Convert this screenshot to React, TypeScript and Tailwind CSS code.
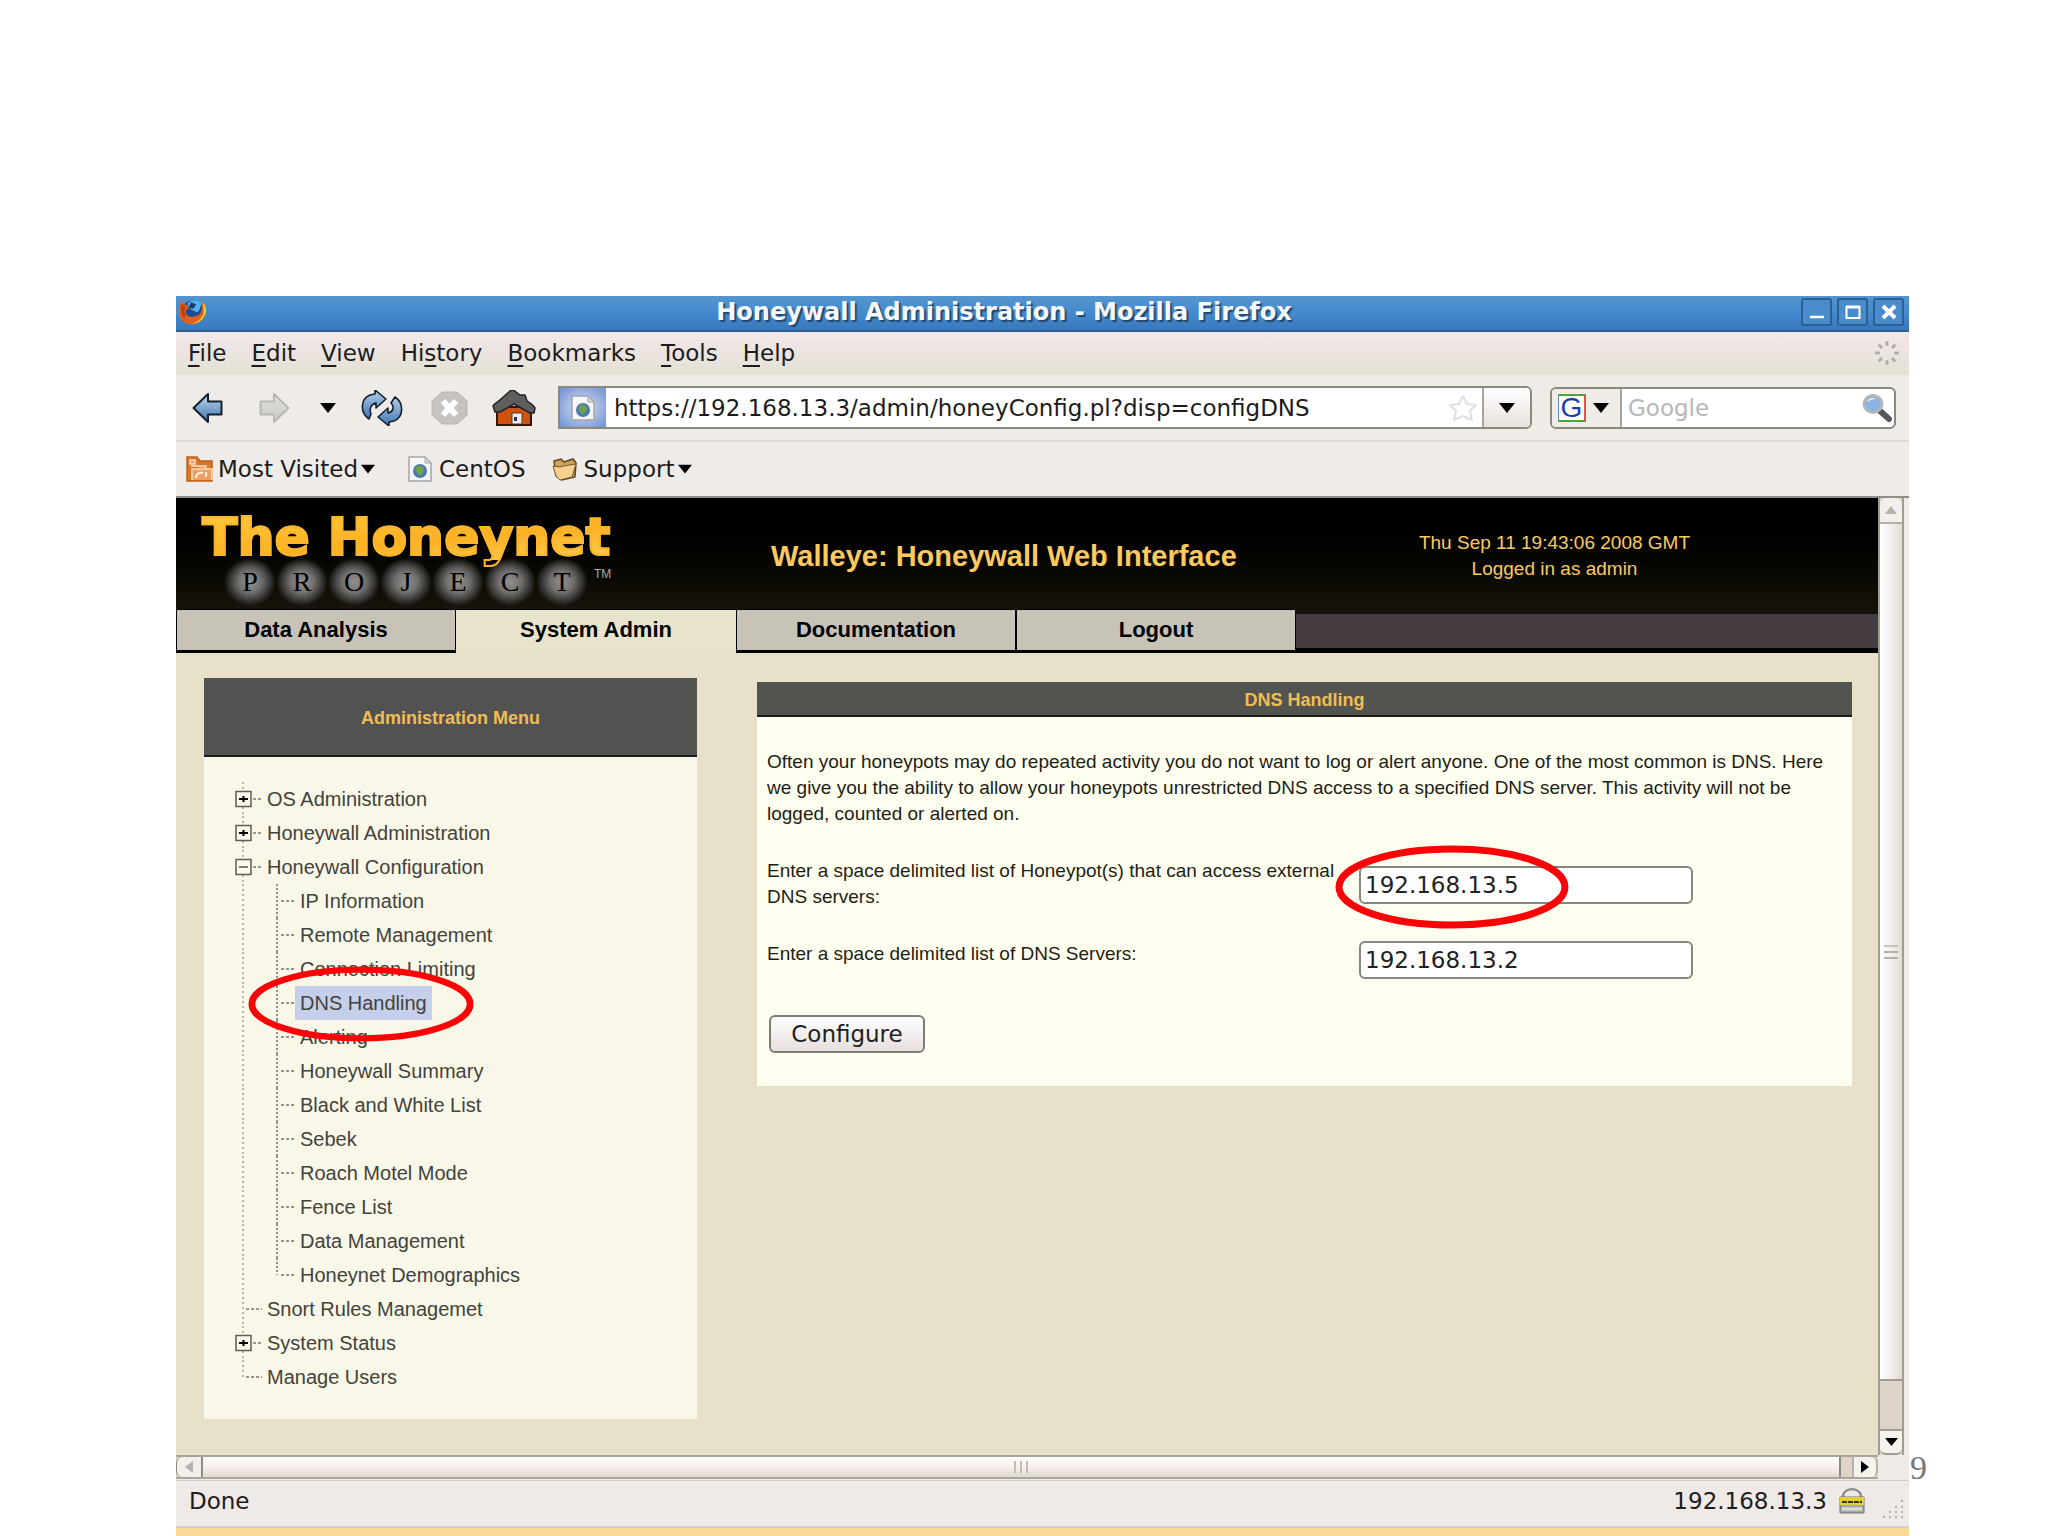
import React from "react";

function Caret({ className = "" }: { className?: string }) {
  return (
    <svg className={`h-[10px] w-4 shrink-0 ${className}`} viewBox="0 0 16 10" aria-hidden="true">
      <path d="M0 0h16L8 10z" fill="#000" />
    </svg>
  );
}

function FirefoxLogo() {
  return (
    <svg className="h-7 w-[29px]" viewBox="0 0 27 24" aria-hidden="true">
      <ellipse cx="14" cy="11" rx="10.5" ry="10" fill="#1f4f96" />
      <path d="M9 4c3-4 10-4 13 0-2 4-1 6-4 8-4-1-8-3-9-8z" fill="#4fb4e6" />
      <path d="M12 3l5 2-3 4-4-1z" fill="#173a70" />
      <path
        d="M2 2c1 2 2 2 4 3 2 0 4 1 4 3l-3 3c0 5 5 7 9 5 5-1 7-5 6-9V2c4 4 5 10 2 15-4 7-14 9-20 3C0 16 0 8 2 2z"
        fill="#e2621b"
      />
      <path d="M23 3c4 4 4 10 1 14-3 5-8 6-12 6 6-1 12-6 12-12z" fill="#f5c92e" />
      <path d="M3 4c-1 5 0 11 3 14l1-3C5 12 6 9 8 8z" fill="#c23c12" />
    </svg>
  );
}

function BackArrow({ muted = false }: { muted?: boolean }) {
  return (
    <svg className={`h-8 w-8 shrink-0 ${muted ? "-scale-x-100" : ""}`} viewBox="0 0 32 32" aria-hidden="true">
      <defs>
        <linearGradient id={muted ? "arrowMuted" : "arrowBlue"} x1="0" y1="0" x2="0" y2="1">
          <stop offset="0" stopColor={muted ? "#e4e2df" : "#c3d8ee"} />
          <stop offset="1" stopColor={muted ? "#c9c7c4" : "#3f74b0"} />
        </linearGradient>
      </defs>
      <path
        d="M1.500 16 16 2v7.500h13.500v13H16V30z"
        fill={muted ? "url(#arrowMuted)" : "url(#arrowBlue)"}
        stroke={muted ? "#b9b7b4" : "#14202e"}
        strokeWidth="2"
        strokeLinejoin="round"
      />
    </svg>
  );
}

function ReloadIcon() {
  return (
    <svg className="h-9 w-[42px] shrink-0" viewBox="0 0 42 36" aria-hidden="true">
      <defs>
        <linearGradient id="reloadBlue" x1="0" y1="0" x2="0" y2="1">
          <stop offset="0" stopColor="#b5cfe9" />
          <stop offset="1" stopColor="#3d74b3" />
        </linearGradient>
      </defs>
      <path
        d="M8 29C-1 23-1 9 9 5l5-1V0l11 9-10 9v-5c-5 1-7 6-5 11z"
        fill="url(#reloadBlue)"
        stroke="#14202e"
        strokeWidth="1.600"
        strokeLinejoin="round"
      />
      <path
        d="M34 7c9 6 9 20-1 24l-5 1v4l-11-9 10-9v5c5-1 7-6 3-10z"
        fill="url(#reloadBlue)"
        stroke="#14202e"
        strokeWidth="1.600"
        strokeLinejoin="round"
      />
    </svg>
  );
}

function StopIcon() {
  return (
    <svg className="h-[34px] w-[37px] shrink-0" viewBox="0 0 37 34" aria-hidden="true">
      <path d="M11 1h15l10 9v14l-10 9H11L1 24V10z" fill="#c6c2c0" stroke="#bab6b4" />
      <path d="M12 10l13 14M25 10 12 24" stroke="#fff" strokeWidth="6" />
    </svg>
  );
}

function HomeIcon() {
  return (
    <svg className="h-9 w-11 shrink-0" viewBox="0 0 44 36" aria-hidden="true">
      <path d="M5 17h34v18H5z" fill="#cf5310" stroke="#33180a" strokeWidth="2" />
      <path
        d="M1 16c1-2 5-4 8-7l9-8c2-1 4-1 6 1l4 3h5l2 6c3 2 7 4 8 7l-1 5h-4L22 14 8 22H3z"
        fill="#5c5e5f"
        stroke="#232424"
        strokeWidth="1.500"
        strokeLinejoin="round"
      />
      <path d="M20 23h10v11H20z" fill="#eceef4" stroke="#67361a" />
      <path d="M22 27h3v4h-3z" fill="#23325a" />
    </svg>
  );
}

function PageIcon({ className = "" }: { className?: string }) {
  return (
    <svg className={`h-[26px] w-[26px] shrink-0 ${className}`} viewBox="0 0 26 26" aria-hidden="true">
      <path d="M2 1h16l6 6v18H2z" fill="#f7f7f8" stroke="#a3a5a8" strokeWidth="1.500" />
      <path d="M18 1v6h6z" fill="#d5d7da" stroke="#a3a5a8" />
      <ellipse cx="13" cy="15" rx="7" ry="7" fill="#4d76b5" />
      <path d="M9 11c3-3 6-1 8 2 0 3-2 6-5 7-1-3-5-5-3-9z" fill="#6da14c" />
    </svg>
  );
}

function RssFolder() {
  return (
    <svg className="h-[26px] w-7 shrink-0" viewBox="0 0 28 26" aria-hidden="true">
      <path d="M1 1h10l3 4h12v20H1z" fill="#d9772b" stroke="#c2611c" strokeWidth="1.500" />
      <path d="M4 4h5v4H4zM5 10h15v3M6 24V13h20v11" fill="#eda063" stroke="#f8dcbf" strokeWidth="1.500" />
      <path d="M10 22c0-4 3-6 7-5M20 21v-5" fill="none" stroke="#fff2e0" strokeWidth="2" />
    </svg>
  );
}

function FolderIcon() {
  return (
    <svg className="h-6 w-[26px] shrink-0" viewBox="0 0 26 24" aria-hidden="true">
      <path d="M2 4l7-2 3 3 9-3 3 4-1 14-13 3-6-4z" fill="#cfa257" stroke="#5b441e" strokeWidth="1.500" />
      <path d="M1 9l7 1 3-1 13-2-4 13-12 3-4-4z" fill="#f5d08d" stroke="#76592b" />
    </svg>
  );
}

function Magnifier() {
  return (
    <svg className="h-[29px] w-[31px] shrink-0" viewBox="0 0 31 29" aria-hidden="true">
      <path d="M18 17l10 9" stroke="#56585a" strokeWidth="6" strokeLinecap="round" />
      <ellipse cx="12" cy="11" rx="9" ry="8.500" fill="#8db3e2" stroke="#b4b6b8" strokeWidth="3" />
      <path d="M6 9c1-4 6-5 9-3-3 0-6 1-9 3z" fill="#e3eefb" />
    </svg>
  );
}

function Throbber() {
  return (
    <svg className="h-6 w-6 shrink-0" viewBox="0 0 24 24" aria-hidden="true">
      {[0, 45, 90, 135, 180, 225, 270, 315].map((a) => (
        <rect key={a} x="10.500" y="0" width="3" height="5" rx="1" fill="#b3adab" transform={`rotate(${a} 12 12)`} />
      ))}
    </svg>
  );
}

function LockIcon() {
  return (
    <svg className="h-[27px] w-[26px] shrink-0" viewBox="0 0 26 27" aria-hidden="true">
      <path d="M4 12V9c1-9 17-9 18 0v3" fill="#eceae6" stroke="#8d8d8b" strokeWidth="2.500" />
      <path d="M1 10h24v16H1z" fill="#a8aba5" stroke="#6e706d" />
      <path d="M1 10h24v8H1z" fill="#e3cf2e" />
      <path d="M3 15h20" stroke="#3a3812" strokeWidth="2" strokeDasharray="5 1" />
      <path d="M3 22h20" stroke="#dadcd7" strokeWidth="3" />
    </svg>
  );
}

function Oval({ className }: { className: string }) {
  return (
    <svg className={`pointer-events-none absolute ${className}`} viewBox="0 0 234 84" preserveAspectRatio="none" aria-hidden="true">
      <ellipse cx="117" cy="42" rx="113" ry="38" fill="none" stroke="#fb0207" strokeWidth="7" />
    </svg>
  );
}

const MENUS: [string, string, string][] = [
  ["", "F", "ile"],
  ["", "E", "dit"],
  ["", "V", "iew"],
  ["Hi", "s", "tory"],
  ["", "B", "ookmarks"],
  ["", "T", "ools"],
  ["", "H", "elp"],
];

function TitleBar() {
  const frame =
    "flex h-7 w-[31px] items-center justify-center rounded-[3px] border-2 border-[#2d5f94] bg-[#4a8ccb]";
  return (
    <header className="flex h-9 items-center border-b-2 border-[#33618f] bg-linear-to-b from-[#5595cf] via-[#438ace] to-[#3a78ba] pr-[5px] pb-0.5 pl-0.5">
      <FirefoxLogo />
      <h1 className="flex-1 text-center text-[24px] leading-8 font-bold text-[#f4f8fc] [text-shadow:2px_2px_1px_#23486f]">
        Honeywall Administration - Mozilla Firefox
      </h1>
      <div className="flex gap-[5px]">
        <button type="button" aria-label="Minimize" className={frame}>
          <svg className="h-4 w-4" viewBox="0 0 16 16">
            <path d="M1 13h14" stroke="#fff" strokeWidth="2.500" />
          </svg>
        </button>
        <button type="button" aria-label="Maximize" className={frame}>
          <svg className="h-4 w-4" viewBox="0 0 16 16">
            <path d="M1.500 3h13v11h-13z" fill="none" stroke="#fff" strokeWidth="2" />
            <path d="M1 3h14" stroke="#fff" strokeWidth="3" />
          </svg>
        </button>
        <button type="button" aria-label="Close" className={frame}>
          <svg className="h-4 w-4" viewBox="0 0 16 16">
            <path d="M2 2l12 12M14 2 2 14" stroke="#fff" strokeWidth="4" />
          </svg>
        </button>
      </div>
    </header>
  );
}

function MenuBar() {
  return (
    <nav className="flex h-[43px] items-center justify-between bg-linear-to-b from-[#f2e7ea] to-[#e4e1d5] pr-2.5 pb-0.5 pl-3">
      <ul className="flex gap-[25px]">
        {MENUS.map(([pre, key, post]) => (
          <li key={pre + key + post}>
            <button type="button">
              {pre}
              <span className="underline decoration-2 underline-offset-4">{key}</span>
              {post}
            </button>
          </li>
        ))}
      </ul>
      <Throbber />
    </nav>
  );
}

function Toolbar() {
  return (
    <div className="flex h-[67px] items-center border-b-2 border-[#dedad4] bg-[#efebe7] pr-[13px] pl-4">
      <button type="button" aria-label="Back">
        <BackArrow />
      </button>
      <button type="button" aria-label="Forward" className="ml-[34px]">
        <BackArrow muted />
      </button>
      <button type="button" aria-label="Recent pages" className="ml-[30px]">
        <Caret />
      </button>
      <button type="button" aria-label="Reload" className="ml-[25px]">
        <ReloadIcon />
      </button>
      <button type="button" aria-label="Stop" className="ml-7">
        <StopIcon />
      </button>
      <button type="button" aria-label="Home" className="ml-6">
        <HomeIcon />
      </button>
      <div className="ml-[22px] flex h-[43px] flex-1 items-center overflow-hidden rounded-md rounded-l-none border-2 border-[#8b897c] bg-white">
        <span className="flex h-full w-[46px] items-center justify-center bg-[radial-gradient(#dbe3f6,#6e8fd2)]">
          <PageIcon />
        </span>
        <input
          aria-label="Location"
          defaultValue="https://192.168.13.3/admin/honeyConfig.pl?disp=configDNS"
          className="h-full min-w-0 flex-1 bg-transparent pl-2 outline-none"
        />
        <svg className="h-7 w-[30px] shrink-0" viewBox="0 0 30 28" aria-hidden="true">
          <path
            d="M15 2l4 8 9 1-6 6 2 9-9-4-9 4 2-9-6-6 9-1z"
            fill="#fff"
            stroke="#e0e0e0"
            strokeWidth="2"
            strokeLinejoin="round"
          />
        </svg>
        <button
          type="button"
          aria-label="History list"
          className="ml-1 flex h-full w-12 items-center justify-center border-l-2 border-[#a7a49b] bg-linear-to-b from-white to-[#e9e2df]"
        >
          <Caret />
        </button>
      </div>
      <div className="ml-[18px] flex h-[42px] w-[346px] items-center overflow-hidden rounded-md border-2 border-[#8b897c] bg-white">
        <button
          type="button"
          aria-label="Search engine"
          className="flex h-full w-[70px] items-center gap-[7px] border-r-2 border-[#a7a49b] bg-[#efebe7] pl-1.5"
        >
          <span className="flex h-7 w-7 items-center justify-center border-y-2 border-r-2 border-l border-y-[#4aa53c] border-r-[#e0564d] border-l-[#5f87dc] bg-white font-['Liberation_Sans',sans-serif] text-[28px] leading-6 text-[#1c3fae]">
            G
          </span>
          <Caret />
        </button>
        <input
          aria-label="Web search"
          placeholder="Google"
          className="h-full min-w-0 flex-1 bg-transparent pl-1.5 outline-none placeholder:text-[#b7b7b7]"
        />
        <span className="pr-0.5">
          <Magnifier />
        </span>
      </div>
    </div>
  );
}

function BookmarksBar() {
  return (
    <div className="flex h-14 items-center border-b-2 border-[#8f8d89] bg-[#efebe8] pl-2.5">
      <button type="button" className="flex items-center">
        <RssFolder />
        <span className="ml-1">Most Visited</span>
        <Caret className="ml-[3px] w-[14px]" />
      </button>
      <a href="#centos" className="ml-8 flex items-center">
        <PageIcon />
        <span className="ml-1.5">CentOS</span>
      </a>
      <button type="button" className="ml-[26px] flex items-center">
        <FolderIcon />
        <span className="ml-1.5">Support</span>
        <Caret className="ml-1 w-[14px]" />
      </button>
    </div>
  );
}

function Banner() {
  return (
    <div className="flex h-[111px] bg-linear-to-b from-black via-[#040401] to-[#17120c] font-['Liberation_Sans',sans-serif] text-[#fcca5f]">
      <div className="w-[560px] shrink-0 pt-4 pl-[26px]">
        <p className="relative bg-linear-to-br from-[#ffc93c] via-[#fdb022] to-[#ffd75c] bg-clip-text font-['DejaVu_Sans',sans-serif] text-[52px] leading-[46px] font-bold text-transparent [-webkit-text-stroke:2px_#fdb52a]">
          The Honeynet
        </p>
        <div className="-mt-0.5 flex items-start pl-[22px] font-['Liberation_Serif',serif] text-[28px] leading-[48px] text-black">
          {"PROJECT".split("").map((c, i) => (
            <span
              key={i}
              className="h-12 w-[52px] bg-[radial-gradient(closest-side,#93918f,#6d6b69_45%,#3a3836_75%,transparent)] text-center [text-shadow:0_0_14px_#8f8d8b,0_0_24px_#8f8d8b]"
            >
              {c}
            </span>
          ))}
          <span className="pt-2 pl-1.5 font-['Liberation_Sans',sans-serif] text-xs leading-4 text-[#a9a7a5]">TM</span>
        </div>
      </div>
      <h2 className="w-[540px] shrink-0 self-center pt-1 pl-[35px] text-[29px] leading-8 font-bold">
        Walleye: Honeywall Web Interface
      </h2>
      <p className="flex-1 pt-8 pr-[45px] text-center text-[19px] leading-[26px]">
        Thu Sep 11 19:43:06 2008 GMT
        <br />
        Logged in as admin
      </p>
    </div>
  );
}

function Tabs() {
  return (
    <div className="flex h-11 bg-[#17120c] font-['Liberation_Sans',sans-serif] text-[22px] font-bold text-black">
      {["Data Analysis", "System Admin", "Documentation", "Logout"].map((t, i) => (
        <a
          key={t}
          href="#tab"
          className={`flex w-[280px] items-center justify-center ${
            i === 1 ? "border-t border-b-[3px] border-t-black border-b-[#e8e3cb] bg-[#e8e3cb]" : "border border-b-[3px] border-black bg-[#c7c3b7]"
          }`}
        >
          {t}
        </a>
      ))}
      <div className="mt-[5px] flex-1 border-b-[5px] border-black bg-[#453c41]" />
    </div>
  );
}

type Node = { label: string; kind?: "plus" | "minus"; depth: 0 | 1; last?: boolean; current?: boolean };

const TREE: Node[] = [
  { label: "OS Administration", kind: "plus", depth: 0 },
  { label: "Honeywall Administration", kind: "plus", depth: 0 },
  { label: "Honeywall Configuration", kind: "minus", depth: 0 },
  { label: "IP Information", depth: 1 },
  { label: "Remote Management", depth: 1 },
  { label: "Connection Limiting", depth: 1 },
  { label: "DNS Handling", depth: 1, current: true },
  { label: "Alerting", depth: 1 },
  { label: "Honeywall Summary", depth: 1 },
  { label: "Black and White List", depth: 1 },
  { label: "Sebek", depth: 1 },
  { label: "Roach Motel Mode", depth: 1 },
  { label: "Fence List", depth: 1 },
  { label: "Data Management", depth: 1 },
  { label: "Honeynet Demographics", depth: 1, last: true },
  { label: "Snort Rules Managemet", depth: 0 },
  { label: "System Status", kind: "plus", depth: 0 },
  { label: "Manage Users", depth: 0, last: true },
];

function Guide({ node }: { node: Node }) {
  const child = node.depth === 1;
  const end = node.last ? 17 : 34;
  return (
    <svg className={`h-[34px] shrink-0 ${child ? "w-[60px]" : "w-[27px]"}`} aria-hidden="true">
      <path d={`M8 0V${child ? 34 : end}`} stroke="#a3a298" strokeWidth="1.500" strokeDasharray="2 3" />
      {child && <path d={`M42 0V${end}`} stroke="#6f6e66" strokeWidth="1.500" strokeDasharray="2 2" />}
      <path
        d={child ? "M46 17h14" : node.kind ? "M18 17h8" : "M11 17h16"}
        stroke="#77766e"
        strokeWidth="1.500"
        strokeDasharray="3 2"
      />
      {node.kind && (
        <>
          <path d="M1 9.500h15v15H1z" fill="#fbfaea" stroke="#5d5c56" strokeWidth="1.500" />
          <path
            d={node.kind === "plus" ? "M4 17h9M8.500 14v6" : "M4 17h9"}
            stroke={node.kind === "plus" ? "#000" : "#55544f"}
            strokeWidth={node.kind === "plus" ? 2 : 1.5}
          />
        </>
      )}
    </svg>
  );
}

function SideMenu() {
  return (
    <aside className="w-[493px] shrink-0 bg-[#f9f8e8] pb-[25px]">
      <h3 className="flex h-[79px] items-center justify-center border-b-2 border-[#1c1c1a] bg-[#525350] pt-0.5 text-[18px] font-bold text-[#f0bd55]">
        Administration Menu
      </h3>
      <ul className="relative pt-[25px] pl-[31px] text-[20px] leading-[34px] text-[#43423c]">
        {TREE.map((n) => (
          <li key={n.label} className="flex">
            <Guide node={n} />
            <a href="#item" className={n.current ? "bg-[#c5cfe9] px-[5px]" : "px-[5px]"}>
              {n.label}
            </a>
          </li>
        ))}
        <Oval className="top-[209px] left-[44px] h-[76px] w-[226px]" />
      </ul>
    </aside>
  );
}

function DnsForm() {
  const field =
    "h-[38px] w-[334px] rounded-md border-2 border-[#88867e] bg-white pl-1 font-['DejaVu_Sans',sans-serif] text-[23px] text-[#222] outline-none";
  return (
    <main className="mt-1 flex-1 self-start bg-[#fffff0] pb-[33px]">
      <h3 className="flex h-[35px] items-center justify-center border-b-2 border-[#1c1c1a] bg-[#525450] pt-0.5 text-[18px] font-bold text-[#f0bd55]">
        DNS Handling
      </h3>
      <form className="px-2.5 pt-8 text-[19px] leading-[26px]" onSubmit={(e) => e.preventDefault()}>
        <p>
          Often your honeypots may do repeated activity you do not want to log or alert anyone. One of the most common
          is DNS. Here we give you the ability to allow your honeypots unrestricted DNS access to a specified DNS
          server. This activity will not be logged, counted or alerted on.
        </p>
        <div className="mt-[31px] grid grid-cols-[592px_1fr] gap-y-[31px]">
          <label htmlFor="pots" className="pr-2">
            Enter a space delimited list of Honeypot(s) that can access external DNS servers:
          </label>
          <div className="relative pt-2">
            <input id="pots" defaultValue="192.168.13.5" className={field} />
            <Oval className="top-[-13px] left-[-24px] h-[84px] w-[234px]" />
          </div>
          <label htmlFor="servers">Enter a space delimited list of DNS Servers:</label>
          <input id="servers" defaultValue="192.168.13.2" className={field} />
        </div>
        <button
          type="submit"
          className="mt-9 ml-0.5 h-[38px] w-[156px] rounded-md border-2 border-[#7f7c78] bg-linear-to-b from-white to-[#e6dfdd] font-['DejaVu_Sans',sans-serif] text-[23px] leading-8 text-[#222]"
        >
          Configure
        </button>
      </form>
    </main>
  );
}

function VerticalScrollbar() {
  return (
    <div className="flex w-[26px] shrink-0 flex-col border-r-2 border-l-2 border-[#a09d92] bg-[#ddd3c7]">
      <button
        type="button"
        aria-label="Scroll up"
        className="flex h-[26px] items-center justify-center rounded-t-md border-b-2 border-[#b5b1aa] bg-[#f3efec]"
      >
        <svg className="h-2 w-3" viewBox="0 0 12 8">
          <path d="M0 8h12L6 0z" fill="#b5b1ad" />
        </svg>
      </button>
      <div className="flex flex-1 flex-col items-center justify-center gap-1 border-b-2 border-[#a09d92] bg-linear-to-r from-white via-[#f3eeee] to-[#e2dcd6]">
        <i className="h-0.5 w-[14px] bg-[#c9c4bf]" />
        <i className="h-0.5 w-[14px] bg-[#b5b0ab]" />
        <i className="h-0.5 w-[14px] bg-[#b5b0ab]" />
      </div>
      <button
        type="button"
        aria-label="Scroll down"
        className="mt-12 flex h-[26px] items-center justify-center rounded-b-md border-t-2 border-b-2 border-[#a09d92] bg-[#f6f2ee]"
      >
        <Caret className="h-2 w-[13px]" />
      </button>
    </div>
  );
}

function HorizontalScrollbar() {
  return (
    <div className="mr-[31px] flex h-6 border-y-2 border-[#aaa59b] bg-[#ddd3c7]">
      <button
        type="button"
        aria-label="Scroll left"
        className="flex w-[27px] items-center justify-center rounded-l-md border-r-2 border-l border-[#8d8a83] bg-[#f3efec]"
      >
        <svg className="h-3 w-2" viewBox="0 0 8 12">
          <path d="M8 0v12L0 6z" fill="#b5b1ad" />
        </svg>
      </button>
      <div className="flex flex-1 items-center justify-center gap-1 border-r-2 border-[#8d8a83] bg-linear-to-b from-white via-[#f6efec] to-[#e0dacf]">
        <i className="h-3 w-0.5 bg-[#c4bfb6]" />
        <i className="h-3 w-0.5 bg-[#c4bfb6]" />
        <i className="h-3 w-0.5 bg-[#c4bfb6]" />
      </div>
      <button
        type="button"
        aria-label="Scroll right"
        className="ml-[11px] flex w-[26px] items-center justify-center rounded-r-md border-r-2 border-l-2 border-[#b5b1aa] bg-[#f6f2ee]"
      >
        <svg className="h-3 w-2" viewBox="0 0 8 12">
          <path d="M0 0v12l8-6z" fill="#000" />
        </svg>
      </button>
    </div>
  );
}

function StatusBar() {
  return (
    <footer className="mt-px flex h-12 items-center border-t border-b-2 border-t-[#cfcac5] border-b-[#d5cecd] bg-[#efe9e8] pr-1 pb-1.5 pl-[13px]">
      <span className="flex-1">Done</span>
      <span>192.168.13.3</span>
      <span className="ml-3">
        <LockIcon />
      </span>
      <svg className="mt-4 ml-4 h-5 w-6" viewBox="0 0 24 20" aria-hidden="true">
        {[
          [20, 2],
          [14, 8],
          [20, 8],
          [8, 13],
          [14, 13],
          [20, 13],
          [2, 18],
          [8, 18],
          [14, 18],
          [20, 18],
        ].map(([x, y]) => (
          <rect key={`${x}-${y}`} x={x} y={y - 1} width="2" height="2" fill="#b5aeac" />
        ))}
      </svg>
    </footer>
  );
}

export default function App() {
  return (
    <div className="flex min-h-screen bg-white pt-[296px] pl-44 font-['DejaVu_Sans',sans-serif] text-[23px] leading-7 text-[#1c1c1c]">
      <div className="flex min-w-0 flex-1 flex-col bg-[#efebe8]">
        <TitleBar />
        <MenuBar />
        <Toolbar />
        <BookmarksBar />
        <div className="flex pr-[5px]">
          <div className="min-w-0 flex-1 bg-[#e7e1c9]">
            <Banner />
            <Tabs />
            <div className="flex gap-[60px] pt-[25px] pr-[26px] pb-9 pl-7 font-['Liberation_Sans',sans-serif] text-[#1d1d16]">
              <SideMenu />
              <DnsForm />
            </div>
          </div>
          <VerticalScrollbar />
        </div>
        <HorizontalScrollbar />
        <StatusBar />
        <div className="flex-1 bg-[#fcdb9a]" />
      </div>
      <div className="flex w-[139px] shrink-0 items-end pb-11 pl-px font-['Liberation_Serif',serif] text-[34px] leading-[48px] text-[#777]">
        9
      </div>
    </div>
  );
}
